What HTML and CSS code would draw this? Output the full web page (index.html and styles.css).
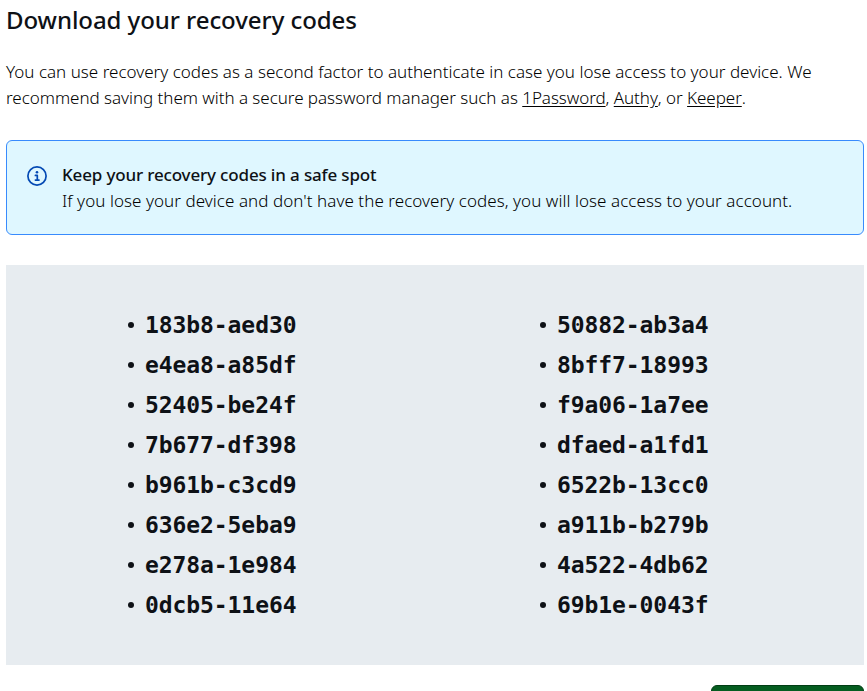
FILE: index.html
```html
<!DOCTYPE html>
<html lang="en">
<head>
<meta charset="utf-8">
<title>Recovery codes</title>
<link rel="stylesheet" href="styles.css">
</head>
<body>
<main class="page">
  <h1 class="title">Download your recovery codes</h1>
  <p class="intro"><span class="line">You can use recovery codes as a second factor to authenticate in case you lose access to your device. We</span> <span class="line line-links">recommend saving them with a secure password manager such as <a href="#">1Password</a>, <a href="#">Authy</a>, or <a href="#">Keeper</a>.</span></p>
  <section class="notice">
    <svg class="notice-icon" viewBox="0 0 20 20" width="20" height="20" aria-hidden="true">
      <circle cx="10" cy="10" r="9.1" fill="none" stroke="currentColor" stroke-width="1.7"/>
      <circle cx="10" cy="6.2" r="1.3" fill="currentColor"/>
      <path d="M8.4 9.4h1.9v4.6M8.4 14.1h3.6" fill="none" stroke="currentColor" stroke-width="1.7" stroke-linecap="round" stroke-linejoin="round"/>
    </svg>
    <div class="notice-body">
      <h2 class="notice-title">Keep your recovery codes in a safe spot</h2>
      <p class="notice-text">If you lose your device and don't have the recovery codes, you will lose access to your account.</p>
    </div>
  </section>
  <section class="codes">
    <ul class="code-list">
      <li>183b8-aed30</li><li>e4ea8-a85df</li><li>52405-be24f</li><li>7b677-df398</li>
      <li>b961b-c3cd9</li><li>636e2-5eba9</li><li>e278a-1e984</li><li>0dcb5-11e64</li>
    </ul>
    <ul class="code-list">
      <li>50882-ab3a4</li><li>8bff7-18993</li><li>f9a06-1a7ee</li><li>dfaed-a1fd1</li>
      <li>6522b-13cc0</li><li>a911b-b279b</li><li>4a522-4db62</li><li>69b1e-0043f</li>
    </ul>
  </section>
  <div class="actions"><button class="primary" type="button"></button></div>
</main>
</body>
</html>
```
FILE: styles.css
```css
* { box-sizing: border-box; }
body { margin: 0; background: #fff; color: #0e1116; font-family: "Noto Sans", sans-serif; overflow: hidden; height: 691px; }
h1, h2, p, ul { margin: 0; padding: 0; }
.page { padding: 0 3px 0 6px; }
.title { height: 40px; font-size: 24px; line-height: 40px; font-weight: 500; letter-spacing: -0.06px; white-space: nowrap; }
.intro { margin-top: 19px; font-size: 17px; line-height: 26px; font-weight: 350; color: #000; letter-spacing: 0.01px; }
.line { display: block; white-space: nowrap; }
.line-links { letter-spacing: -0.035px; }
.intro a { color: inherit; text-decoration: underline; text-underline-offset: 2px; }
.line-links a { letter-spacing: -0.06px; }
.notice { display: flex; gap: 15px; height: 95px; margin-top: 29px; padding: 21px 20px; border: 1px solid #388bfd; border-radius: 6px; background: #dff7ff; }
.notice-icon { flex: none; margin-top: 4px; color: #0349b4; }
.notice-title { font-size: 17px; line-height: 26px; font-weight: 500; letter-spacing: -0.16px; white-space: nowrap; }
.notice-text { font-size: 17px; line-height: 26px; font-weight: 350; color: #000; letter-spacing: 0.055px; white-space: nowrap; }
.codes { display: grid; grid-template-columns: 412px 1fr; height: 400px; margin-top: 30px; padding: 40px 0 40px 122px; background: #e7ecf0; }
.code-list { list-style: none; font: 700 23px/40px "DejaVu Sans Mono", monospace; letter-spacing: -0.08px; }
.code-list li { display: flex; align-items: center; gap: 11px; height: 40px; }
.code-list li::before { content: ""; width: 6px; height: 6px; border-radius: 50%; background: currentColor; }
.actions { display: flex; justify-content: flex-end; margin-top: 20px; }
.primary { width: 153px; height: 40px; border: 1px solid #013d14; border-radius: 6px; background: #055d20; }
```
